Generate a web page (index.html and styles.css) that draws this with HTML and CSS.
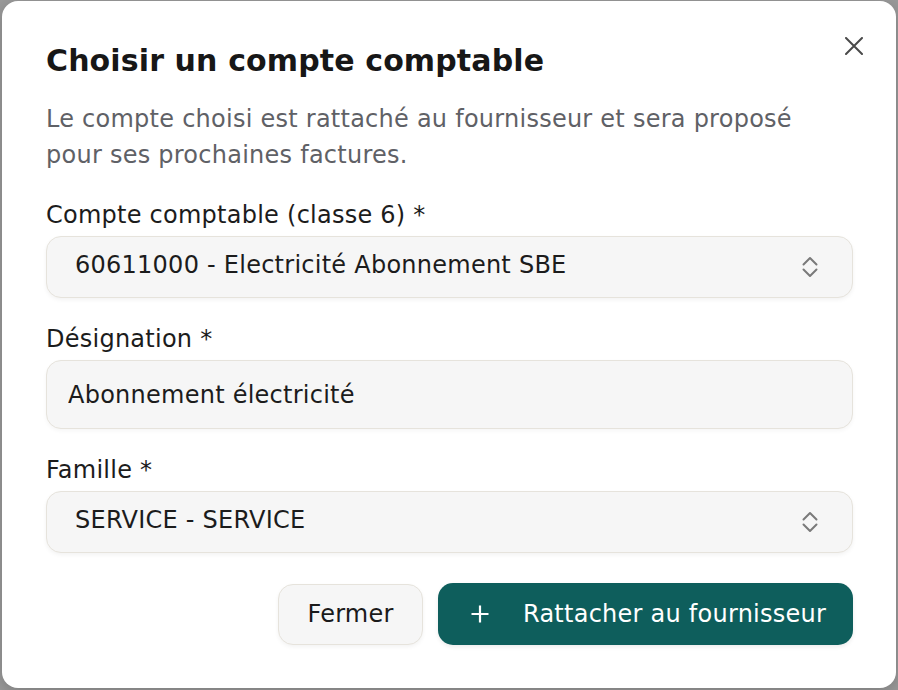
FILE: index.html
```html
<!DOCTYPE html>
<html lang="fr">
<head>
<meta charset="utf-8">
<title>Choisir un compte comptable</title>
<link rel="stylesheet" href="styles.css">
</head>
<body>
<div class="overlay">
  <div class="modal" role="dialog" aria-labelledby="dlg-title">
    <button class="close" aria-label="Fermer">
      <svg width="18" height="18" viewBox="0 0 18 18"><path d="M1 1 L17 17 M17 1 L1 17" stroke="currentColor" stroke-width="2" stroke-linecap="round" fill="none"/></svg>
    </button>
    <h2 class="title" id="dlg-title">Choisir un compte comptable</h2>
    <p class="desc">Le compte choisi est rattaché au fournisseur et sera proposé pour ses prochaines factures.</p>

    <div class="fields">
      <div class="field">
        <label class="label">Compte comptable (classe 6) *</label>
        <div class="select">
          <span class="select-value">60611000 - Electricité Abonnement SBE</span>
          <svg class="chev" width="16" height="22" viewBox="0 0 16 22"><path d="M1.5 8.5 L8 2 L14.5 8.5 M1.5 13.5 L8 20 L14.5 13.5" stroke="currentColor" stroke-width="2" stroke-linecap="round" stroke-linejoin="round" fill="none"/></svg>
        </div>
      </div>
      <div class="field">
        <label class="label" for="des">Désignation *</label>
        <input class="input" id="des" type="text" value="Abonnement électricité">
      </div>
      <div class="field">
        <label class="label">Famille *</label>
        <div class="select">
          <span class="select-value">SERVICE - SERVICE</span>
          <svg class="chev" width="16" height="22" viewBox="0 0 16 22"><path d="M1.5 8.5 L8 2 L14.5 8.5 M1.5 13.5 L8 20 L14.5 13.5" stroke="currentColor" stroke-width="2" stroke-linecap="round" stroke-linejoin="round" fill="none"/></svg>
        </div>
      </div>
    </div>

    <div class="actions">
      <button class="btn btn-secondary">Fermer</button>
      <button class="btn btn-primary">
        <svg width="18" height="18" viewBox="0 0 18 18"><path d="M9 0.5 V17.5 M0.5 9 H17.5" stroke="currentColor" stroke-width="2.2" fill="none"/></svg>
        <span>Rattacher au fournisseur</span>
      </button>
    </div>
  </div>
</div>
</body>
</html>
```
FILE: styles.css
```css
* { box-sizing: border-box; }

html, body {
  margin: 0;
  height: 100%;
}

body {
  background: #9a9a9a;
  font-family: "DejaVu Sans", "Noto Sans", sans-serif;
}

.overlay {
  height: 690px;
  padding: 1px 2px 2px 2px;
  display: flex;
}

.modal {
  position: relative;
  flex: 1;
  background: #ffffff;
  border-radius: 16px;
  box-shadow: 0 4px 16px rgba(0, 0, 0, 0.2);
  padding: 42px 43px 43px 44px;
  display: flex;
  flex-direction: column;
  letter-spacing: 0.25px;
}

.close {
  position: absolute;
  top: 36px;
  right: 33px;
  width: 18px;
  height: 18px;
  padding: 0;
  border: 0;
  background: transparent;
  color: #4a4a4a;
  display: flex;
  cursor: pointer;
}

.title {
  margin: 0;
  font-size: 30px;
  line-height: 36px;
  font-weight: 700;
  color: #171717;
  letter-spacing: 0.12px;
}

.desc {
  margin: 22px 0 0;
  max-width: 790px;
  font-size: 24px;
  line-height: 36px;
  color: #5f6166;
}

.fields {
  margin-top: 24px;
  display: flex;
  flex-direction: column;
  gap: 23px;
}

.field {
  display: flex;
  flex-direction: column;
  gap: 3px;
}

.label {
  font-size: 24px;
  line-height: 36px;
  color: #1c1c1c;
}

.select {
  height: 62px;
  display: flex;
  align-items: center;
  justify-content: space-between;
  padding: 0 34px 0 28px;
  background: #f6f6f6;
  border: 1px solid #e6e3dc;
  border-radius: 15px;
  box-shadow: 0 2px 4px rgba(0, 0, 0, 0.05);
  color: #1c1c1c;
  font-size: 24px;
}

.select-value {
  line-height: 36px;
  margin-top: -5px;
}

.chev {
  color: #7a7a7a;
}

.input {
  height: 69px;
  padding: 0 21px;
  background: #f6f6f6;
  border: 1px solid #e6e3dc;
  border-radius: 15px;
  box-shadow: 0 2px 4px rgba(0, 0, 0, 0.04);
  font-family: inherit;
  font-size: 24px;
  letter-spacing: 0.25px;
  color: #1c1c1c;
  outline: none;
}

.actions {
  margin-top: 30px;
  display: flex;
  justify-content: flex-end;
  align-items: center;
  gap: 15px;
}

.btn {
  font-family: inherit;
  font-size: 24px;
  line-height: 36px;
  letter-spacing: 0.25px;
  border-radius: 15px;
  cursor: pointer;
  display: flex;
  align-items: center;
}

.btn-secondary {
  height: 61px;
  width: 145px;
  padding: 0;
  justify-content: center;
  background: #f6f6f6;
  border: 1px solid #e6e3dc;
  color: #1a1a1a;
  box-shadow: 0 2px 4px rgba(0, 0, 0, 0.05);
}

.btn-primary {
  height: 62px;
  width: 415px;
  padding: 0 0 0 33px;
  gap: 34px;
  background: #0e5e5c;
  border: 0;
  color: #ffffff;
  box-shadow: 0 2px 4px rgba(0, 0, 0, 0.08);
}
```
